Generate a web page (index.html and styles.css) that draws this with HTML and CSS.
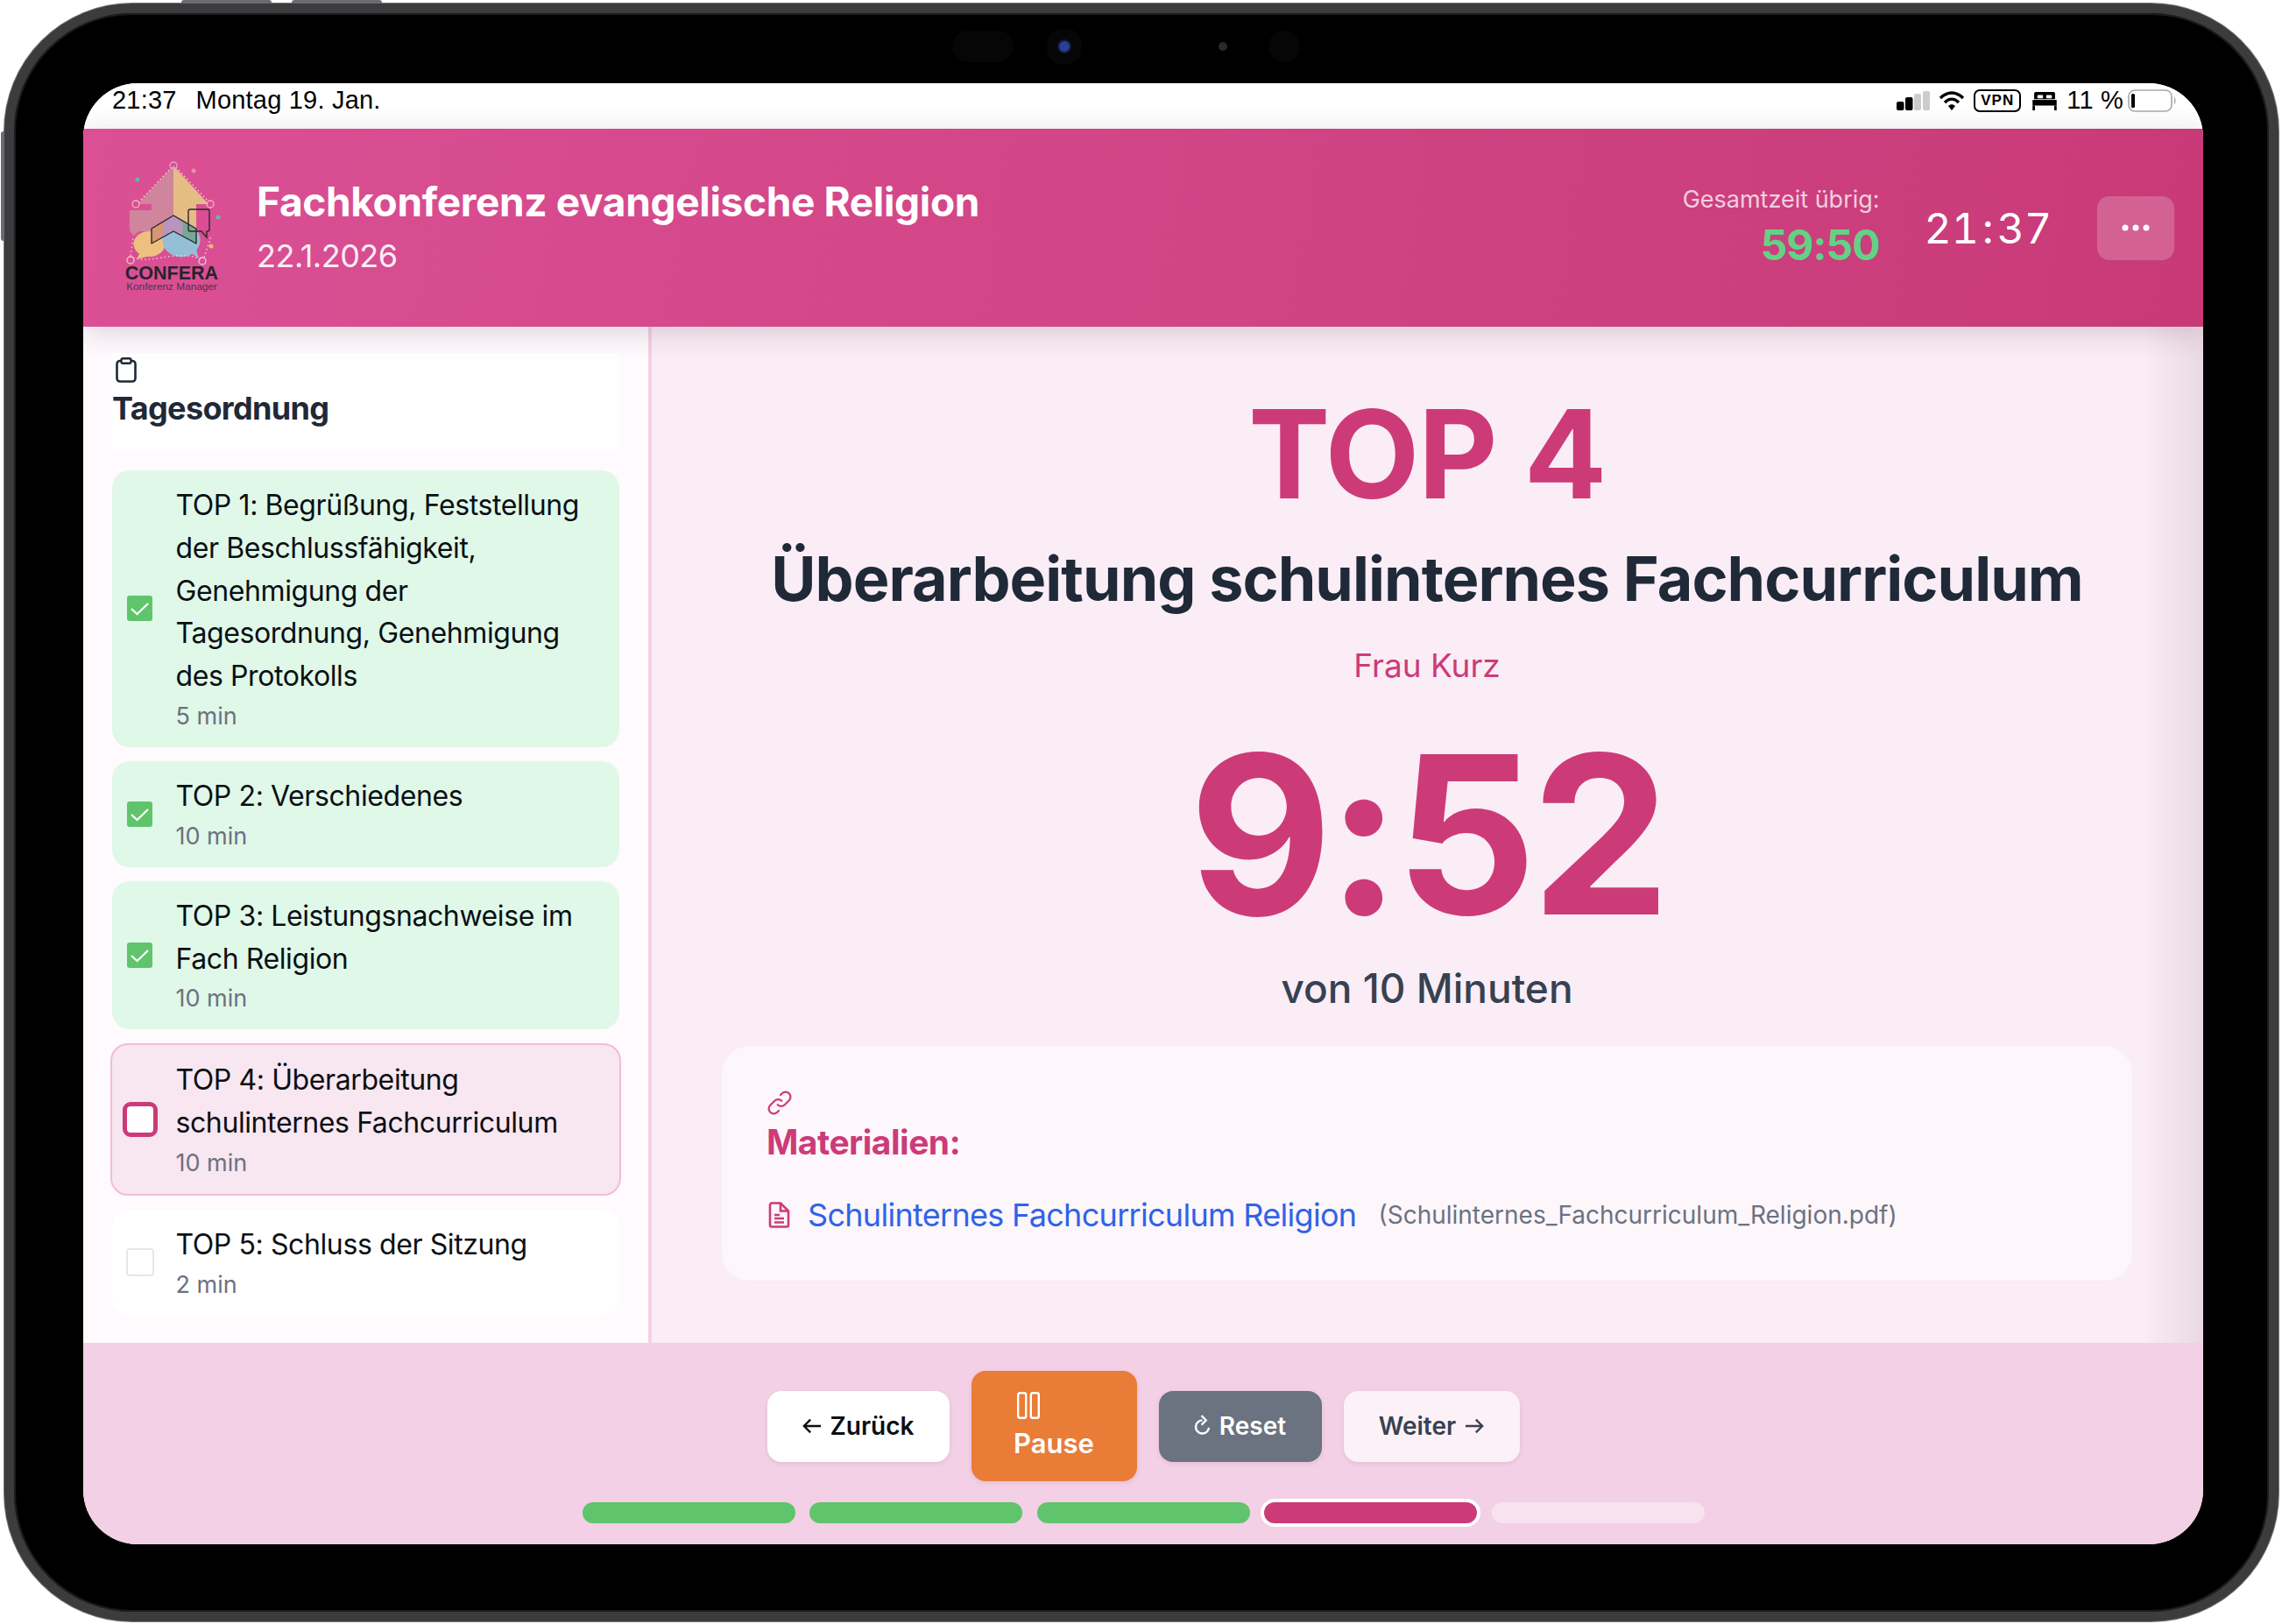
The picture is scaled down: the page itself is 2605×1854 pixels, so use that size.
FILE: index.html
```html
<!DOCTYPE html>
<html lang="de">
<head>
    <meta charset="UTF-8">
    <title>Confera</title>
    <link rel="stylesheet" href="styles.css">
</head>
<body>
    <div class="device">
        <span class="side-btn top-a"></span>
        <span class="side-btn top-b"></span>
        <span class="side-btn left-a"></span>
        <div class="sensors">
            <span class="sensor oval"></span>
            <span class="sensor lens"></span>
            <span class="sensor dot"></span>
            <span class="sensor big"></span>
        </div>
        <div class="screen">
            <div class="statusbar">
                <div class="status-left"><span>21:37</span><span>Montag 19. Jan.</span></div>
                <div class="status-right">
                    <svg class="st-signal" viewBox="0 0 38 22"><rect x="0" y="12" width="8.500" height="10" rx="2" fill="#000"/><rect x="10" y="7" width="8.500" height="15" rx="2" fill="#000"/><rect x="20" y="3" width="8" height="19" rx="2" fill="#ccc"/><rect x="30" y="0" width="8" height="22" rx="2" fill="#ccc"/></svg>
                    <svg class="st-wifi" viewBox="0 0 30 22"><path d="M2 8C10 0 20 0 28 8" fill="none" stroke="#000" stroke-width="3.400"/><path d="M7 13c5-5 11-5 16 0" fill="none" stroke="#000" stroke-width="3.400"/><path d="M11 17c2.500-2.500 5.500-2.500 8 0l-4 5z" fill="#000"/></svg>
                    <span class="st-vpn">VPN</span>
                    <svg class="st-bed" viewBox="0 0 30 24"><path d="M4 1h22a2 2 0 0 1 2 2v7H2V3a2 2 0 0 1 2-2z" fill="#000"/><rect x="6" y="5" width="7" height="4" rx="1" fill="#fff"/><rect x="17" y="5" width="7" height="4" rx="1" fill="#fff"/><rect x="0" y="11" width="30" height="7" fill="#000"/><rect x="0" y="18" width="3" height="6" fill="#000"/><rect x="27" y="18" width="3" height="6" fill="#000"/></svg>
                    <span class="st-pct">11 %</span>
                    <svg class="st-batt" viewBox="0 0 56 26"><rect x="1" y="1" width="49" height="24" rx="7" fill="none" stroke="#a8a8a8" stroke-width="1.600"/><rect x="4" y="5" width="4" height="16" rx="1.500" fill="#000"/><path d="M53 9c2 1 2 7 0 8z" fill="#a8a8a8"/></svg>
                </div>
            </div>

            <header class="topbar">
                <div class="brand">
                    <svg class="logo" viewBox="0 0 107 152">
                        <path d="M55 5 L14 49 H30 V56 H5 V79 L9 85 L16 80 H55z" fill="#cf869c"/>
                        <path d="M55 5 L95 49 H81 V87 H55z" fill="#e6bc85"/>
                        <ellipse cx="27.500" cy="94.500" rx="18" ry="14.500" fill="#edc07f"/>
                        <path d="M17 104 l-4 8 12-3z" fill="#edc07f"/>
                        <ellipse cx="64" cy="90" rx="21.500" ry="19.500" fill="#94bfd6"/>
                        <path d="M74 104 l10 7-4-14z" fill="#94bfd6"/>
                        <path d="M30 77 L55 62 V80 L30 94z" fill="#d59673"/>
                        <path d="M55 62 L81 77 V94 L55 80z" fill="#78a894"/>
                        <path d="M42 87 L55 80 L65 85 L66 71 L55 62 L44 69z" fill="#b995bd"/>
                        <path d="M30 77 L55 62 L81 77 V94 L55 80 L30 94z" fill="none" stroke="#2c2830" stroke-width="1.400" stroke-linejoin="round"/>
                        <path d="M74 55 H94 a2 2 0 0 1 2 2 V78 a2 2 0 0 1-2 2 H93 V87 L87 80 H74 a2 2 0 0 1-2-2 V57 a2 2 0 0 1 2-2z" fill="none" stroke="#2c2830" stroke-width="1.400"/>
                        <path d="M53 7 L15 47 M58 7 L95 46 M9 110 C30 118 60 100 86 112 M6 108 L9 88 M90 110 L98 86" fill="none" stroke="#f4d6e6" stroke-width="1.300" stroke-dasharray="1.500 3"/>
                        <circle cx="55" cy="5" r="4" fill="none" stroke="#d8a8cc" stroke-width="1.300"/>
                        <circle cx="12" cy="49" r="4" fill="none" stroke="#eeb8c0" stroke-width="1.300"/>
                        <circle cx="97" cy="49" r="4" fill="none" stroke="#eeb8c0" stroke-width="1.300"/>
                        <circle cx="6" cy="113" r="4" fill="none" stroke="#f0c8cc" stroke-width="1.300"/>
                        <circle cx="88" cy="114" r="4" fill="none" stroke="#e8c8e4" stroke-width="1.300"/>
                        <circle cx="14" cy="21" r="2.500" fill="#6fb4a0"/>
                        <circle cx="78" cy="11" r="2.500" fill="#e890a8"/>
                        <circle cx="106" cy="64" r="2.500" fill="#6fb4a0"/>
                        <circle cx="98" cy="97" r="2.500" fill="#ecbd70"/>
                        <text x="53" y="135" class="logo-name" text-anchor="middle">CONFERA</text>
                        <text x="53" y="147" class="logo-sub" text-anchor="middle">Konferenz Manager</text>
                    </svg>
                    <div class="brand-text">
                        <h1>Fachkonferenz evangelische Religion</h1>
                        <p>22.1.2026</p>
                    </div>
                </div>
                <div class="top-right">
                    <div class="total">
                        <span class="total-label">Gesamtzeit übrig:</span>
                        <span class="total-time">59:50</span>
                    </div>
                    <div class="clock">21<span class="clock-colon">:</span>37</div>
                    <button class="menu-btn"><svg viewBox="0 0 32 8" width="32" height="8"><circle cx="4" cy="4" r="3.500" fill="#fff"/><circle cx="16" cy="4" r="3.500" fill="#fff"/><circle cx="28" cy="4" r="3.500" fill="#fff"/></svg></button>
                </div>
            </header>

            <div class="content">
                <aside class="sidebar">
                    <div class="side-head">
                        <svg class="ico-clip" viewBox="0 0 24 29"><rect x="1.500" y="4" width="21" height="23.500" rx="3.500" fill="none" stroke="#1f2937" stroke-width="2.600"/><rect x="6.500" y="1.300" width="11" height="5.500" rx="1.800" fill="#fff" stroke="#1f2937" stroke-width="2.400"/></svg>
                        <h2>Tagesordnung</h2>
                    </div>
                    <div class="agenda">
                        <div class="item done">
                            <span class="check"><svg viewBox="0 0 29 29"><path d="M5 15l6.500 6L24 9" fill="none" stroke="#fff" stroke-width="2.200"/></svg></span>
                            <div class="item-text">
                                <div class="item-title">TOP 1: Begrüßung, Feststellung der Beschlussfähigkeit, Genehmigung der Tagesordnung, Genehmigung des Protokolls</div>
                                <div class="item-time">5 min</div>
                            </div>
                        </div>
                        <div class="item done">
                            <span class="check"><svg viewBox="0 0 29 29"><path d="M5 15l6.500 6L24 9" fill="none" stroke="#fff" stroke-width="2.200"/></svg></span>
                            <div class="item-text">
                                <div class="item-title">TOP 2: Verschiedenes</div>
                                <div class="item-time">10 min</div>
                            </div>
                        </div>
                        <div class="item done">
                            <span class="check"><svg viewBox="0 0 29 29"><path d="M5 15l6.500 6L24 9" fill="none" stroke="#fff" stroke-width="2.200"/></svg></span>
                            <div class="item-text">
                                <div class="item-title">TOP 3: Leistungsnachweise im Fach Religion</div>
                                <div class="item-time">10 min</div>
                            </div>
                        </div>
                        <div class="item current">
                            <span class="check"></span>
                            <div class="item-text">
                                <div class="item-title">TOP 4: Überarbeitung schulinternes Fachcurriculum</div>
                                <div class="item-time">10 min</div>
                            </div>
                        </div>
                        <div class="item">
                            <span class="check"></span>
                            <div class="item-text">
                                <div class="item-title">TOP 5: Schluss der Sitzung</div>
                                <div class="item-time">2 min</div>
                            </div>
                        </div>
                    </div>
                </aside>

                <main class="main">
                    <div class="top-number">TOP 4</div>
                    <div class="top-title">Überarbeitung schulinternes Fachcurriculum</div>
                    <div class="top-person">Frau Kurz</div>
                    <div class="timer">9:52</div>
                    <div class="timer-of">von 10 Minuten</div>
                    <section class="materials">
                        <svg class="ico-link" viewBox="0 0 24 24"><path d="M13.800 10.200a4.500 4.500 0 0 0-6.400 0l-4 4a4.500 4.500 0 0 0 6.400 6.400l1.400-1.400M10.200 13.800a4.500 4.500 0 0 0 6.400 0l4-4a4.500 4.500 0 0 0-6.400-6.400l-1.400 1.400" fill="none" stroke="#cc3b78" stroke-width="1.800" stroke-linecap="round"/></svg>
                        <h3>Materialien:</h3>
                        <div class="file-row">
                            <svg class="ico-file" viewBox="0 0 25 30"><path d="M2 3.500A2 2 0 0 1 4 1.500h10l9 9v16a2 2 0 0 1-2 2H4a2 2 0 0 1-2-2z" fill="none" stroke="#cc3b78" stroke-width="2.600"/><path d="M14 1.500v9h9" fill="none" stroke="#cc3b78" stroke-width="2.600"/><path d="M7 15h6M7 19h11M7 23.500h11" stroke="#cc3b78" stroke-width="2.400"/></svg>
                            <a class="file-link">Schulinternes Fachcurriculum Religion</a>
                            <span class="file-name">(Schulinternes_Fachcurriculum_Religion.pdf)</span>
                        </div>
                    </section>
                </main>
            </div>

            <footer class="controls">
                <div class="buttons">
                    <button class="btn btn-back"><svg class="ico-arrow" viewBox="0 0 24 20"><path d="M23 10H3M10 2l-8 8 8 8" fill="none" stroke="currentColor" stroke-width="2.600"/></svg>Zurück</button>
                    <button class="btn btn-pause">
                        <span class="pause-inner">
                            <svg class="ico-pause" viewBox="0 0 26 31"><rect x="1.200" y="1.200" width="9" height="28.600" rx="2" fill="none" stroke="#fff" stroke-width="2.400"/><rect x="15.800" y="1.200" width="9" height="28.600" rx="2" fill="none" stroke="#fff" stroke-width="2.400"/></svg>
                            <span>Pause</span>
                        </span>
                    </button>
                    <button class="btn btn-reset"><svg class="ico-reset" viewBox="0 0 20 28"><path d="M10 6.500a8 8 0 1 0 8 9" fill="none" stroke="#fff" stroke-width="2.600"/><path d="M9 1l5.500 5.500L9 12" fill="none" stroke="#fff" stroke-width="2.400"/></svg>Reset</button>
                    <button class="btn btn-next">Weiter<svg class="ico-arrow" viewBox="0 0 24 20"><path d="M1 10h20M14 2l8 8-8 8" fill="none" stroke="currentColor" stroke-width="2.600"/></svg></button>
                </div>
                <div class="progress">
                    <span class="seg seg-done"></span>
                    <span class="seg seg-done"></span>
                    <span class="seg seg-done"></span>
                    <span class="seg seg-now"></span>
                    <span class="seg"></span>
                </div>
            </footer>
            <div class="edge-shade"></div>
        </div>
    </div>
</body>
</html>
```

FILE: styles.css
```css
* {
    box-sizing: border-box;
}
html, body {
    margin: 0;
    padding: 0;
    height: 100%;
    background-color: #fff;
}
body {
    font-family: Inter, "Liberation Sans", sans-serif;
    color: #1f2937;
    padding: 4px 0 0 5px;
    overflow: hidden;
}
h1, h2, h3, p {
    margin: 0;
}

/* ---- geraet ---- */
.device {
    position: relative;
    width: 2596px;
    height: 1847px;
    border-radius: 146px;
    background-color: #000;
    border: 11px solid #3c3c3e;
    box-shadow: inset 0 0 0 2px #1c1c1e, 0 0 0 1px #77777a;
    padding: 80px 75px 77px 79px;
}
.side-btn {
    position: absolute;
    background-color: #6c6c70;
}
.top-a, .top-b {
    top: -15px;
    width: 103px;
    height: 4px;
    border-radius: 3px 3px 0 0;
}
.top-a { left: 191px; }
.top-b { left: 317px; }
.left-a {
    left: -15px;
    top: 135px;
    width: 4px;
    height: 125px;
    border-radius: 3px 0 0 3px;
}
.sensors {
    position: absolute;
    top: 20px;
    left: 1071px;
    display: flex;
    align-items: center;
}
.sensor {
    display: block;
    border-radius: 50%;
}
.sensor.oval {
    width: 70px;
    height: 36px;
    border-radius: 18px;
    background-color: #060606;
}
.sensor.lens {
    width: 12px;
    height: 12px;
    margin-left: 52px;
    background-color: #2a3f8f;
    box-shadow: 0 0 0 2px #121a3a, 0 0 0 14px #060609;
}
.sensor.dot {
    width: 10px;
    height: 10px;
    margin-left: 170px;
    background-color: #2a2a2a;
}
.sensor.big {
    width: 36px;
    height: 36px;
    margin-left: 47px;
    background-color: #060606;
}
.screen {
    position: relative;
    height: 100%;
    border-radius: 62px;
    overflow: hidden;
    display: flex;
    flex-direction: column;
    background-color: #faedf5;
}
.edge-shade {
    position: absolute;
    top: 52px;
    right: 0;
    bottom: 0;
    width: 70px;
    background: linear-gradient(to right, rgba(90,40,70,0), rgba(90,40,70,.1));
    pointer-events: none;
}

/* ---- statusbar ---- */
.statusbar {
    height: 52px;
    flex: none;
    background-color: #fff;
    color: #000;
    display: flex;
    justify-content: space-between;
    align-items: center;
    padding: 0 30px 13px 33px;
    font-family: "Liberation Sans", Arial, sans-serif;
    font-size: 29px;
    letter-spacing: .2px;
}
.status-left {
    display: flex;
    gap: 22px;
}
.status-right {
    display: flex;
    align-items: center;
    gap: 10px;
}
.st-signal { width: 38px; height: 22px; }
.st-wifi { width: 30px; height: 24px; margin-left: 0; }
.st-vpn {
    border: 2px solid #000;
    border-radius: 7px;
    font-size: 17px;
    font-weight: bold;
    padding: 2px 6px;
    line-height: 18px;
    letter-spacing: 1px;
}
.st-bed { width: 30px; height: 22px; margin-left: 2px; }
.st-pct { font-size: 29px; margin-left: 0; }
.st-batt { width: 56px; height: 26px; margin-left: -5px; }

/* ---- kopfzeile ---- */
.topbar {
    height: 226px;
    flex: none;
    display: flex;
    justify-content: space-between;
    align-items: center;
    padding: 0 33px 0 48px;
    background: linear-gradient(100deg, #db5095, #c83a77);
    color: #fff;
    box-shadow: 0 6px 30px rgba(60,30,50,.18);
    position: relative;
    z-index: 2;
}
.brand {
    display: flex;
    align-items: center;
    gap: 43px;
}
.logo {
    width: 107px;
    height: 152px;
    overflow: visible;
}
.logo-name {
    font-family: "Liberation Sans", Arial, sans-serif;
    font-weight: bold;
    font-size: 21.500px;
    fill: #26242c;
}
.logo-sub {
    font-family: "Liberation Sans", Arial, sans-serif;
    font-size: 11.800px;
    fill: #4c3348;
}
.brand-text {
    padding-bottom: 4px;
}
.brand-text h1 {
    font-size: 46px;
    font-weight: 700;
    letter-spacing: -0.35px;
    line-height: 56px;
}
.brand-text p {
    font-size: 36px;
    line-height: 44px;
    margin-top: 12px;
    letter-spacing: -0.5px;
    opacity: .9;
}
.top-right {
    display: flex;
    align-items: center;
}
.total {
    display: flex;
    flex-direction: column;
    align-items: flex-end;
    margin-right: 51px;
}
.total-label {
    font-size: 27px;
    line-height: 34px;
    color: rgba(255,255,255,.75);
}
.total-time {
    font-size: 48px;
    font-weight: 700;
    line-height: 58px;
    margin-top: 6px;
    letter-spacing: -1px;
    color: #62d284;
}
.clock {
    font-size: 48px;
    margin-right: 52px;
    font-variant-numeric: tabular-nums;
}
.clock-colon {
    padding: 0 4px;
}
.menu-btn {
    width: 88px;
    height: 73px;
    border: 0;
    border-radius: 14px;
    background-color: rgba(255,255,255,.2);
    display: flex;
    justify-content: center;
    align-items: center;
}

/* ---- inhalt ---- */
.content {
    flex: 1;
    display: flex;
    min-height: 0;
}
.sidebar {
    width: 649px;
    flex: none;
    background-color: #fffafd;
    border-right: 4px solid #f3d0e6;
    padding: 30px 33px 0;
}
.side-head {
    background-color: #fff;
    height: 110px;
    padding: 5px 0 0;
    margin-bottom: 24px;
}
.ico-clip {
    display: block;
    width: 24px;
    height: 29px;
    margin-left: 4px;
}
.side-head h2 {
    font-size: 36px;
    font-weight: 700;
    line-height: 46px;
    letter-spacing: -0.65px;
    margin-top: 6px;
}
.agenda {
    display: flex;
    flex-direction: column;
    gap: 16px;
}
.item {
    display: flex;
    align-items: center;
    background-color: #fff;
    border-radius: 20px;
    padding: 16px 20px 16px 13.500px;
}
.item.done {
    background-color: #e0f8e8;
}
.item.current {
    background-color: #f8e6f1;
    border: 2px solid #f2bcd8;
    margin: 0 -2px;
}
.check {
    flex: none;
    width: 32px;
    height: 32px;
    border: 2px solid #e5e7eb;
    border-radius: 4px;
    background-color: #fff;
    margin: 0 25px 0 2px;
}
.item.done .check {
    width: 29px;
    height: 29px;
    margin: 0 26.500px 0 3.500px;
    border: 0;
    border-radius: 3px;
    background-color: #5fc46c;
}
.check svg {
    display: block;
}
.item.current .check {
    width: 40px;
    height: 40px;
    margin: 0 21px 0 -2px;
    border: 5px solid #cc3b78;
    border-radius: 9px;
}
.item-text {
    flex: 1;
    min-width: 0;
}
.item-title {
    font-size: 32px;
    line-height: 48.800px;
    color: #0b0f14;
    letter-spacing: -0.4px;
}
.item-time {
    font-size: 27px;
    line-height: 38px;
    color: #6b7280;
    margin-top: 2px;
}

/* ---- hauptbereich ---- */
.main {
    flex: 1;
    min-width: 0;
    display: flex;
    flex-direction: column;
    align-items: center;
    padding: 65px 81px 0 80px;
    background-color: #faedf5;
}
.top-number {
    font-size: 140px;
    font-weight: 700;
    line-height: 160px;
    color: #cc3b78;
    letter-spacing: -1.500px;
}
.top-title {
    font-size: 70px;
    font-weight: 700;
    line-height: 88px;
    margin-top: 19px;
    letter-spacing: -0.950px;
    white-space: nowrap;
}
.top-person {
    font-size: 37px;
    line-height: 48px;
    margin-top: 31px;
    color: #cc3b78;
}
.timer {
    font-size: 252px;
    font-weight: 700;
    line-height: 300px;
    margin-top: 19px;
    color: #cc3b78;
    letter-spacing: -6px;
}
.timer-of {
    font-size: 46px;
    font-weight: 500;
    line-height: 56px;
    margin-top: -3px;
    color: #374151;
}
.materials {
    align-self: stretch;
    margin-top: 38px;
    height: 268px;
    padding: 50px 51px 0;
    background-color: #fdf6fb;
    border-radius: 32px;
}
.ico-link {
    display: block;
    width: 30px;
    height: 30px;
}
.materials h3 {
    font-size: 39px;
    font-weight: 700;
    line-height: 48px;
    letter-spacing: -0.5px;
    color: #cc3b78;
    margin-top: 6px;
}
.file-row {
    display: flex;
    align-items: center;
    margin-top: 37px;
}
.ico-file {
    width: 25px;
    height: 30px;
    margin: 0 20px 0 2px;
}
.file-link {
    font-size: 36px;
    color: #2f63e8;
    line-height: 44px;
    letter-spacing: -0.7px;
}
.file-name {
    font-size: 28px;
    color: #6b7280;
    margin-left: 25px;
}

/* ---- unten ---- */
.controls {
    height: 230px;
    flex: none;
    background-color: #f3d0e6;
    display: flex;
    flex-direction: column;
    align-items: center;
    padding-top: 32px;
    position: relative;
    z-index: 1;
}
.buttons {
    display: flex;
    align-items: center;
    gap: 25px;
    height: 126px;
}
.btn {
    height: 81px;
    border: 0;
    border-radius: 16px;
    font-family: inherit;
    font-size: 28px;
    font-weight: 600;
    display: flex;
    align-items: center;
    justify-content: center;
    gap: 10px;
    box-shadow: 0 2px 5px rgba(120,60,100,.12);
}
.btn-back {
    width: 208px;
    background-color: #fff;
    color: #0b0f14;
}
.btn-pause {
    width: 189px;
    height: 126px;
    background-color: #e97c37;
    color: #fff;
    font-size: 31px;
}
.pause-inner {
    display: flex;
    flex-direction: column;
    align-items: flex-start;
    gap: 8px;
    line-height: 40px;
}
.ico-pause {
    width: 26px;
    height: 31px;
    margin-left: 4px;
}
.btn-reset {
    width: 186px;
    background-color: #6b7280;
    color: #fff;
}
.btn-next {
    width: 201px;
    background-color: #fbf1f7;
    color: #374151;
}
.ico-arrow {
    width: 22px;
    height: 20px;
}
.ico-reset {
    width: 19px;
    height: 27px;
}
.progress {
    display: flex;
    gap: 16.500px;
    margin-top: 24px;
}
.seg {
    display: block;
    width: 243px;
    height: 24px;
    border-radius: 12px;
    background-color: #f8e2ef;
}
.seg-done {
    background-color: #5fc46c;
}
.seg-now {
    background-color: #cc3b78;
    box-shadow: 0 0 0 4px #fff;
}
```
